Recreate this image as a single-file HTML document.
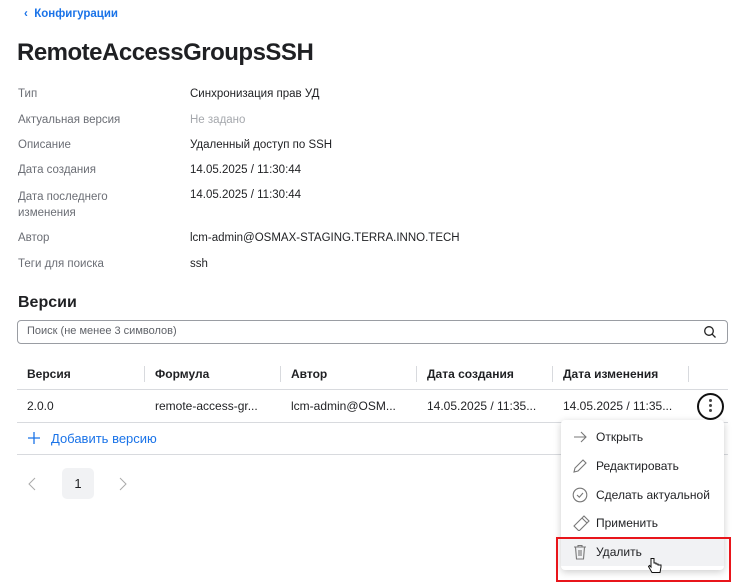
<!DOCTYPE html>
<html><head><meta charset="utf-8"><style>
*{box-sizing:border-box;margin:0;padding:0}
body{width:742px;height:587px;background:#fff;font-family:"Liberation Sans","DejaVu Sans",sans-serif;color:#1f2023;position:relative;overflow:hidden;font-size:12px}
.a{position:absolute;white-space:nowrap}
.lbl{color:#6b6e75;font-size:11.5px}
.val{font-size:11.5px}
.th{font-weight:bold;font-size:12px}
.td{font-size:12px}
.sep{position:absolute;width:1px;height:16px;background:#d8dade;top:366px}
.mi{position:absolute;left:596px;font-size:12px}
</style></head><body>
<div class="a" style="left:24px;top:8px;color:#1a73e8;font-size:11.5px;font-weight:bold">‹&nbsp; Конфигурации</div>
<div class="a" style="left:17px;top:39px;font-size:24px;font-weight:bold;letter-spacing:-0.5px">RemoteAccessGroupsSSH</div>

<div class="a lbl" style="left:18px;top:88px">Тип</div><div class="a val" style="left:190px;top:88px">Синхронизация прав УД</div>
<div class="a lbl" style="left:18px;top:114px">Актуальная версия</div><div class="a val" style="left:190px;top:114px;color:#a5a8ad">Не задано</div>
<div class="a lbl" style="left:18px;top:139px">Описание</div><div class="a val" style="left:190px;top:139px">Удаленный доступ по SSH</div>
<div class="a lbl" style="left:18px;top:164px">Дата создания</div><div class="a val" style="left:190px;top:164px">14.05.2025 / 11:30:44</div>
<div class="a lbl" style="left:18px;top:189px;line-height:16px">Дата последнего<br>изменения</div><div class="a val" style="left:190px;top:189px">14.05.2025 / 11:30:44</div>
<div class="a lbl" style="left:18px;top:232px">Автор</div><div class="a val" style="left:190px;top:232px">lcm-admin@OSMAX-STAGING.TERRA.INNO.TECH</div>
<div class="a lbl" style="left:18px;top:258px">Теги для поиска</div><div class="a val" style="left:190px;top:258px">ssh</div>

<div class="a" style="left:18px;top:294px;font-size:16px;font-weight:bold">Версии</div>
<div class="a" style="left:17px;top:320px;width:711px;height:24px;border:1px solid #9a9da3;border-radius:4px"></div>
<div class="a" style="left:27px;top:325px;font-size:11px;color:#5f6268">Поиск (не менее 3 символов)</div>
<svg class="a" style="left:703px;top:325px" width="14" height="14" viewBox="0 0 14 14"><circle cx="6" cy="6" r="4.3" fill="none" stroke="#222" stroke-width="1.3"/><path d="M9.2 9.2L12.5 12.5" stroke="#222" stroke-width="1.3"/></svg>

<div class="a th" style="left:27px;top:367px">Версия</div>
<div class="sep" style="left:144px"></div><div class="a th" style="left:155px;top:367px">Формула</div>
<div class="sep" style="left:280px"></div><div class="a th" style="left:291px;top:367px">Автор</div>
<div class="sep" style="left:416px"></div><div class="a th" style="left:427px;top:367px">Дата создания</div>
<div class="sep" style="left:552px"></div><div class="a th" style="left:563px;top:367px">Дата изменения</div>
<div class="sep" style="left:688px"></div>
<div class="a" style="left:17px;top:389px;width:711px;height:1px;background:#d8dade"></div>
<div class="a td" style="left:27px;top:399px">2.0.0</div>
<div class="a td" style="left:155px;top:399px">remote-access-gr...</div>
<div class="a td" style="left:291px;top:399px">lcm-admin@OSM...</div>
<div class="a td" style="left:427px;top:399px">14.05.2025 / 11:35...</div>
<div class="a td" style="left:563px;top:399px">14.05.2025 / 11:35...</div>
<div class="a" style="left:697px;top:393px;width:27px;height:27px;border:2px solid #111;border-radius:50%"></div>
<div class="a" style="left:709px;top:399px;width:3px;height:3px;background:#444;border-radius:50%;box-shadow:0 5px 0 #444,0 10px 0 #444"></div>
<div class="a" style="left:17px;top:422px;width:711px;height:1px;background:#d8dade"></div>
<svg class="a" style="left:28px;top:432px" width="12" height="12"><path d="M6 0V12M0 6H12" stroke="#1a73e8" stroke-width="1.3"/></svg>
<div class="a" style="left:51px;top:431px;color:#1a73e8;font-size:13px">Добавить версию</div>
<div class="a" style="left:17px;top:454px;width:711px;height:1px;background:#d8dade"></div>
<svg class="a" style="left:28px;top:477px" width="8" height="14"><path d="M7 1L1 7L7 13" fill="none" stroke="#aaa" stroke-width="1"/></svg>
<div class="a" style="left:62px;top:468px;width:32px;height:31px;background:#f1f2f4;border-radius:5px;text-align:center;line-height:31px;font-size:13px">1</div>
<svg class="a" style="left:119px;top:477px" width="8" height="14"><path d="M1 1L7 7L1 13" fill="none" stroke="#aaa" stroke-width="1"/></svg>

<div class="a" style="left:561px;top:420px;width:163px;height:150px;background:#fff;border-radius:4px;box-shadow:0 2px 8px rgba(0,0,0,.2)"></div>
<div class="a" style="left:561px;top:539px;width:163px;height:27px;background:#f1f2f4"></div>
<svg class="a" style="left:572px;top:430px" width="16" height="14"><path d="M2 7H14M9 2L14 7L9 12" fill="none" stroke="#777" stroke-width="1.1"/></svg>
<div class="mi" style="top:430px">Открыть</div>
<svg class="a" style="left:572px;top:458px" width="16" height="16"><path d="M2 14L3 10L11 2L14 5L6 13Z" fill="none" stroke="#777" stroke-width="1.1"/></svg>
<div class="mi" style="top:459px">Редактировать</div>
<svg class="a" style="left:572px;top:487px" width="16" height="16"><circle cx="8" cy="8" r="6.8" fill="none" stroke="#777" stroke-width="1.1"/><path d="M5 8L7.3 10.2L11 6" fill="none" stroke="#777" stroke-width="1.1"/></svg>
<div class="mi" style="top:488px">Сделать актуальной</div>
<svg class="a" style="left:572px;top:515px" width="18" height="16"><path d="M2 11L10 3L15 8L7 16Z M10 3L12 1L17 6L15 8" fill="none" stroke="#777" stroke-width="1.1"/></svg>
<div class="mi" style="top:516px">Применить</div>
<svg class="a" style="left:572px;top:544px" width="16" height="16"><path d="M2 3H14M6 3V1.5H10V3M3.5 3L4.5 15H11.5L12.5 3M7 6V12M9 6V12" fill="none" stroke="#777" stroke-width="1.1"/></svg>
<div class="mi" style="top:545px">Удалить</div>
<div class="a" style="left:556px;top:537px;width:175px;height:45px;border:2px solid #e8151b"></div>
<svg class="a" style="left:647px;top:557px" width="16" height="18"><path d="M4 1.5V10L2.5 8.5L1.5 9.5L5 15.5H13L14 10V8H11V7H9V6H7V1.5Z" fill="#fff" stroke="#111" stroke-width="1"/></svg>
</body></html>
